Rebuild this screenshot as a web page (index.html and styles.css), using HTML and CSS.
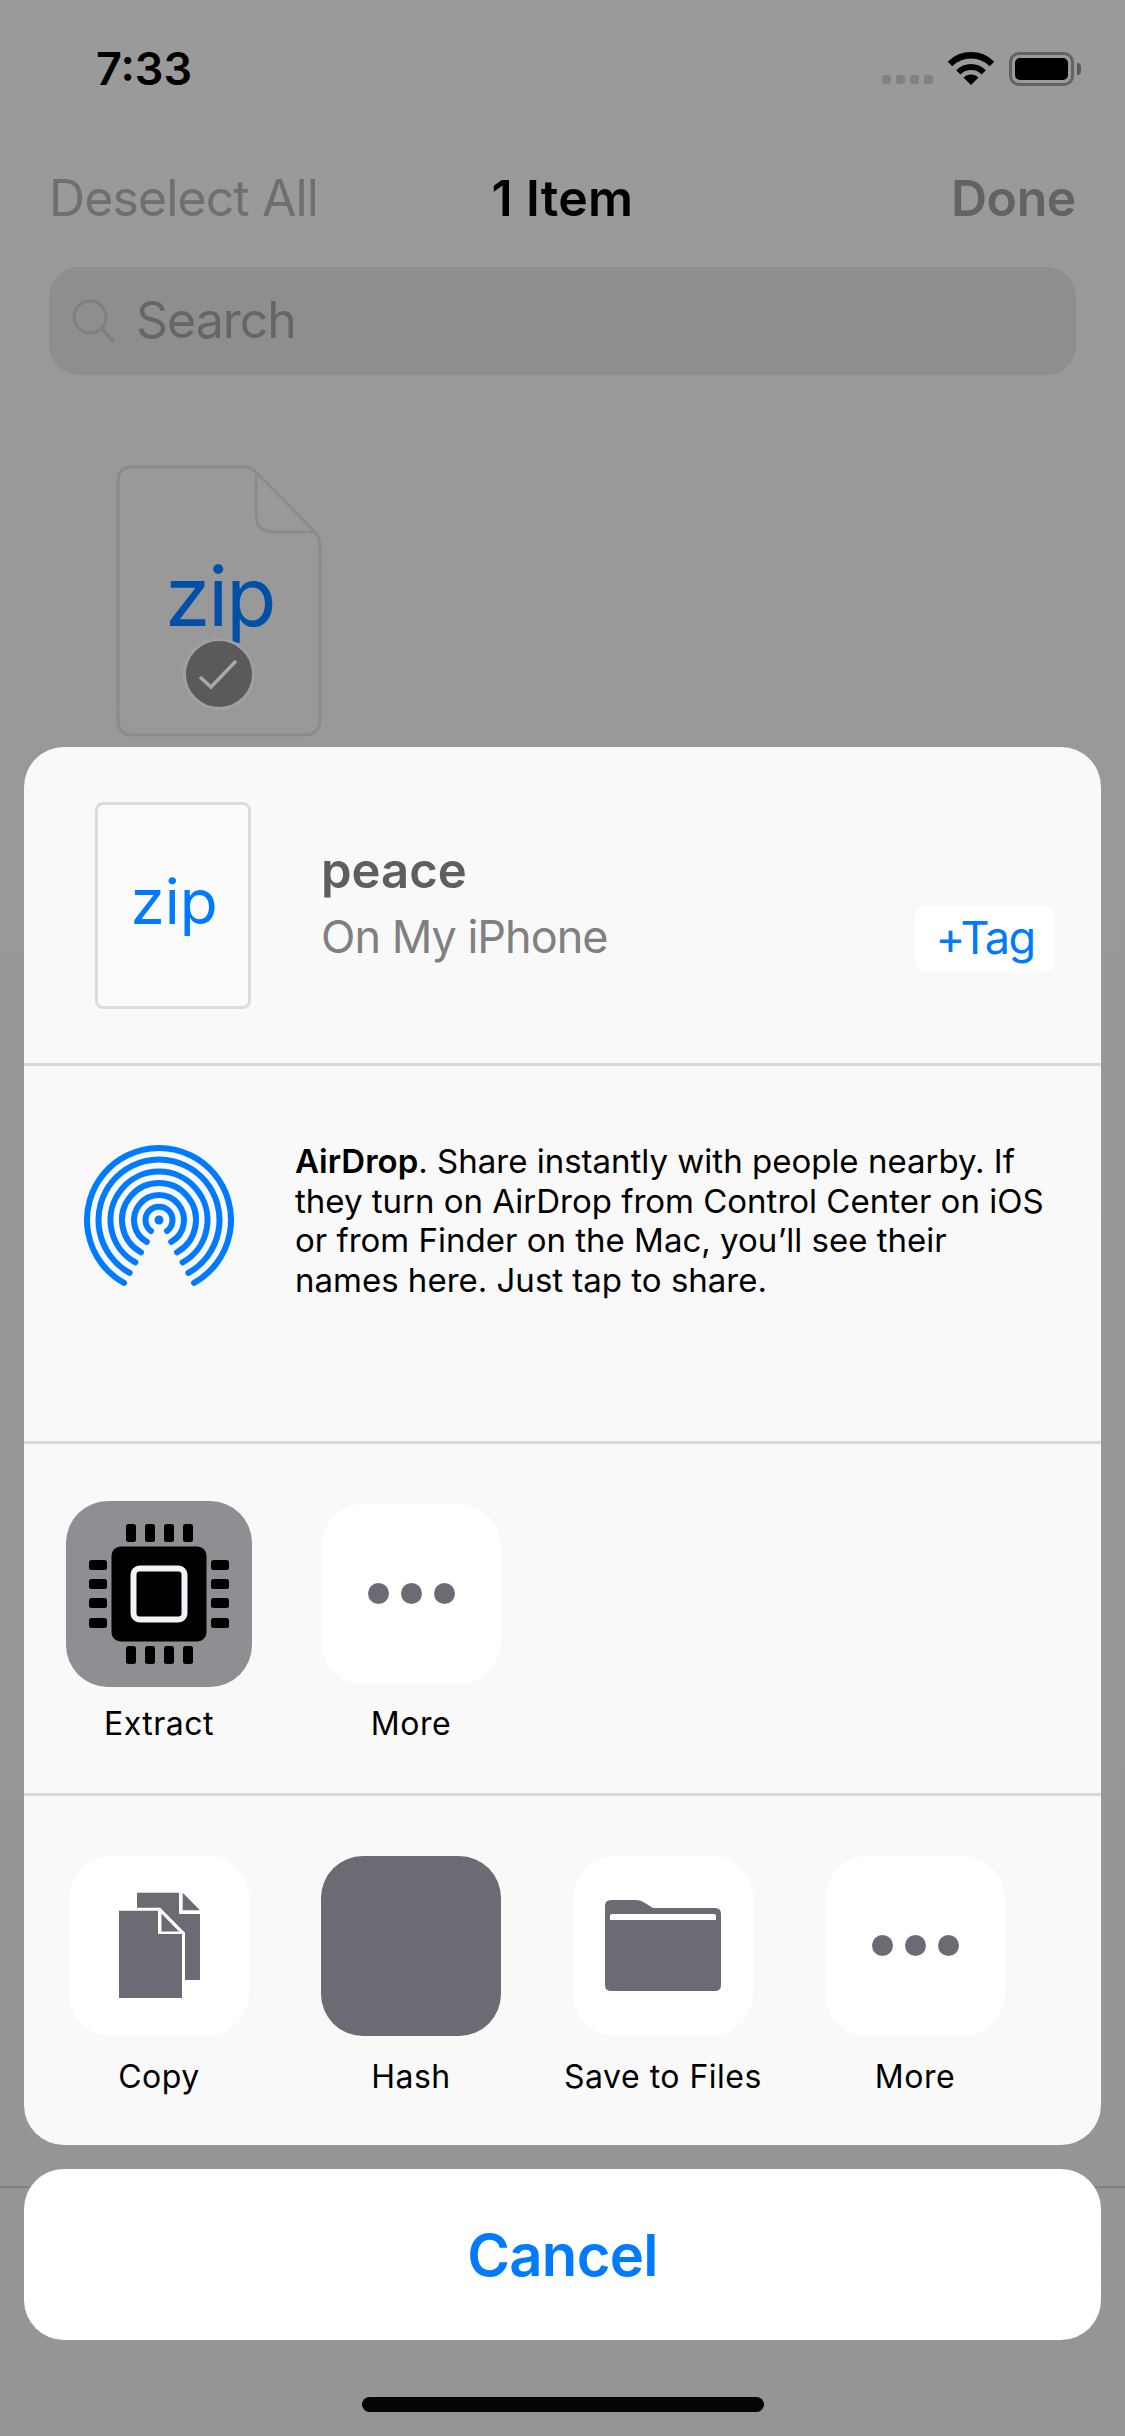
FILE: index.html
```html
<!DOCTYPE html>
<html lang="en">
<head>
    <meta charset="UTF-8">
    <meta name="viewport" content="width=device-width, initial-scale=1.0">
    <title>Share Sheet</title>
    <link rel="stylesheet" href="styles.css">
</head>
<body>

    <div class="screen">
        <!-- page behind the sheet -->
        <div class="status-bar">
            <span class="clock">7:33</span>
            <div class="status-icons">
                <div class="signal"><i></i><i></i><i></i><i></i></div>
                <svg class="wifi" width="46" height="33" viewBox="0 0 46 33">
                    <path d="M2 12A29.7 29.7 0 0 1 44 12" fill="none" stroke="#000" stroke-width="6.5"/>
                    <path d="M10.3 20.3A18 18 0 0 1 35.7 20.3" fill="none" stroke="#000" stroke-width="6"/>
                    <path d="M23 33L15.5 25.5A10.6 10.6 0 0 1 30.5 25.5Z" fill="#000"/>
                </svg>
                <div class="battery"><div class="battery-fill"></div></div>
                <div class="battery-nub"></div>
            </div>
        </div>

        <div class="nav-bar">
            <span class="nav-left">Deselect All</span>
            <span class="nav-title">1 Item</span>
            <span class="nav-right">Done</span>
        </div>

        <div class="search-bar">
            <svg width="44" height="44" viewBox="0 0 44 44">
                <circle cx="18" cy="18" r="16" fill="none" stroke="#7f7f7f" stroke-width="3"/>
                <path d="M30 30L42 43" fill="none" stroke="#7f7f7f" stroke-width="3.5"/>
            </svg>
            <span class="search-text">Search</span>
        </div>

        <div class="file-grid">
            <div class="file-item">
                <svg width="209" height="273" viewBox="0 0 209 273">
                    <path d="M16 2H128Q135 2 140 7L198 66Q204 72 204 80V254Q204 270 188 270H16Q2 270 2 254V16Q2 2 16 2Z" fill="none" stroke="#8b8b8b" stroke-width="3"/>
                    <path d="M140 9V50Q140 67 158 67H199" fill="none" stroke="#8b8b8b" stroke-width="3"/>
                </svg>
                <span class="file-type">zip</span>
                <div class="file-check">
                    <svg width="40" height="32" viewBox="0 0 40 32">
                        <path d="M1 19L12 29L37 3" fill="none" stroke="#a8a8a8" stroke-width="3.5"/>
                    </svg>
                </div>
            </div>
        </div>

        <div class="toolbar"></div>

        <!-- share sheet -->
        <div class="sheet-wrap">
            <div class="sheet">
                <div class="sheet-header">
                    <div class="sheet-file">zip</div>
                    <div class="sheet-info">
                        <div class="sheet-name">peace</div>
                        <div class="sheet-place">On My iPhone</div>
                    </div>
                    <div class="tag-btn">+Tag</div>
                </div>

                <div class="airdrop">
                    <svg class="airdrop-icon" width="160" height="160" viewBox="0 0 160 160">
                        <g fill="none" stroke="#007aff" stroke-width="6" stroke-linecap="round">
                            <path d="M45 142.900A72 72 0 1 1 115 142.900"/>
                            <path d="M50.600 132.900A60.500 60.500 0 1 1 109.400 132.900"/>
                            <path d="M56.400 122.400A48.500 48.500 0 1 1 103.600 122.400"/>
                            <path d="M62 112.300A37 37 0 1 1 98 112.300"/>
                            <path d="M67.800 101.900A25 25 0 1 1 92.200 101.900"/>
                            <path d="M72 91A13.500 13.500 0 1 1 88 91"/>
                        </g>
                        <circle cx="80" cy="80" r="4.500" fill="#007aff"/>
                    </svg>
                    <p class="airdrop-text"><b>AirDrop</b>. Share instantly with people nearby. If<br>they turn on AirDrop from Control Center on iOS<br>or from Finder on the Mac, you’ll see their<br>names here. Just tap to share.</p>
                </div>

                <div class="app-row">
                    <div class="app">
                        <div class="tile tile-big">
                            <svg width="186" height="186" viewBox="0 0 186 186">
                                <rect x="45.500" y="45.500" width="95" height="95" rx="9" fill="#000"/>
                                <rect x="67.500" y="67.500" width="51" height="51" rx="6" fill="none" stroke="#f2f2f7" stroke-width="6"/>
                                <g fill="#000">
                                    <rect x="60" y="23" width="10" height="18" rx="2.500"/>
                                    <rect x="79" y="23" width="10" height="18" rx="2.500"/>
                                    <rect x="98" y="23" width="10" height="18" rx="2.500"/>
                                    <rect x="117" y="23" width="10" height="18" rx="2.500"/>
                                    <rect x="60" y="145" width="10" height="18" rx="2.500"/>
                                    <rect x="79" y="145" width="10" height="18" rx="2.500"/>
                                    <rect x="98" y="145" width="10" height="18" rx="2.500"/>
                                    <rect x="117" y="145" width="10" height="18" rx="2.500"/>
                                    <rect x="23" y="59" width="18" height="10" rx="2.500"/>
                                    <rect x="23" y="78" width="18" height="10" rx="2.500"/>
                                    <rect x="23" y="97" width="18" height="10" rx="2.500"/>
                                    <rect x="23" y="117" width="18" height="10" rx="2.500"/>
                                    <rect x="145" y="59" width="18" height="10" rx="2.500"/>
                                    <rect x="145" y="78" width="18" height="10" rx="2.500"/>
                                    <rect x="145" y="97" width="18" height="10" rx="2.500"/>
                                    <rect x="145" y="117" width="18" height="10" rx="2.500"/>
                                </g>
                            </svg>
                        </div>
                        <span class="app-label">Extract</span>
                    </div>
                    <div class="app">
                        <div class="tile"><div class="dots"><i></i><i></i><i></i></div></div>
                        <span class="app-label">More</span>
                    </div>
                </div>

                <div class="action-row">
                    <div class="app">
                        <div class="tile">
                            <svg width="180" height="180" viewBox="0 0 180 180">
                                <path d="M68 36.700H110V58H131V124H68Z" fill="#6b6b73"/>
                                <path d="M113.700 36.700L131 54.300H113.700Z" fill="#6b6b73"/>
                                <path d="M50 54.700H90L113 78V142H50Z" fill="#fff" stroke="#fff" stroke-width="6"/>
                                <path d="M50 54.700H89V78H113V142H50Z" fill="#6b6b73"/>
                                <path d="M92.500 57.500L110 75.500H92.500Z" fill="#6b6b73"/>
                            </svg>
                        </div>
                        <span class="app-label">Copy</span>
                    </div>
                    <div class="app">
                        <div class="tile tile-dark"></div>
                        <span class="app-label">Hash</span>
                    </div>
                    <div class="app">
                        <div class="tile">
                            <svg width="180" height="180" viewBox="0 0 180 180">
                                <path d="M38 44H62Q68 44 72 47L80 52H142Q148 52 148 58V129Q148 135 142 135H38Q32 135 32 129V50Q32 44 38 44Z" fill="#6b6b73"/>
                                <path d="M39 58H141Q143 58 143 60V64H37V60Q37 58 39 58Z" fill="#fff"/>
                            </svg>
                        </div>
                        <span class="app-label">Save to Files</span>
                    </div>
                    <div class="app">
                        <div class="tile"><div class="dots"><i></i><i></i><i></i></div></div>
                        <span class="app-label">More</span>
                    </div>
                </div>
            </div>

            <div class="cancel-btn">Cancel</div>
        </div>

        <div class="home-bar"></div>
    </div>

</body>
</html>
```

FILE: styles.css
```css
/* iOS share sheet over a dimmed file browser */
body {
    margin: 0;
    font-family: Inter, "Noto Sans", sans-serif;
    background-color: #999;
}

.screen {
    position: relative;
    width: 1125px;
    height: 2436px;
    overflow: hidden;
    display: flex;
    flex-direction: column;
    background: linear-gradient(#9a9a9a, #959595);
}

/* status bar */
.status-bar {
    height: 110px;
    padding: 0 44px 0 96px;
    display: flex;
    justify-content: space-between;
}
.clock {
    margin-top: 42px;
    font-size: 45px;
    line-height: 53px;
    font-weight: 600;
    color: #000;
}
.status-icons {
    display: flex;
    align-items: flex-start;
    padding-top: 52px;
}
.signal {
    display: flex;
    gap: 5px;
    margin-top: 23px;
    margin-right: 15px;
}
.signal i {
    width: 9px;
    height: 9px;
    border-radius: 3px;
    background-color: #818181;
}
.battery {
    width: 65px;
    height: 34px;
    margin-left: 15px;
    padding: 3px;
    box-sizing: border-box;
    border: 3px solid #636363;
    border-radius: 10px;
}
.battery-fill {
    height: 100%;
    border-radius: 5px;
    background-color: #000;
}
.battery-nub {
    width: 4px;
    height: 12px;
    margin: 11px 0 0 3px;
    border-radius: 0 4px 4px 0;
    background-color: #5a5a5a;
}

/* nav */
.nav-bar {
    height: 157px;
    padding: 0 49px;
    display: grid;
    grid-template-columns: 1fr auto 1fr;
    font-size: 50px;
    line-height: 60px;
}
.nav-bar span {
    margin-top: 58px;
}
.nav-left {
    letter-spacing: -0.9px;
    color: #6f6f6f;
}
.nav-title {
    font-weight: 600;
    letter-spacing: 0.3px;
    color: #000;
}
.nav-right {
    text-align: right;
    font-weight: 600;
    letter-spacing: -0.4px;
    color: #636363;
}

/* search */
.search-bar {
    width: 1027px;
    height: 108px;
    margin-left: 49px;
    padding-left: 23px;
    box-sizing: border-box;
    display: flex;
    align-items: center;
    gap: 20px;
    border-radius: 30px;
    background-color: #8e8e8e;
    font-size: 50px;
    color: #666;
}
.search-text {
    margin-top: -3px;
    letter-spacing: -1px;
}

/* file behind the sheet */
.file-grid {
    padding: 90px 0 0 116px;
}
.file-item {
    position: relative;
    width: 209px;
    height: 273px;
}
.file-type {
    position: absolute;
    left: 49px;
    top: 82px;
    font-size: 82px;
    line-height: 100px;
    letter-spacing: -2px;
    color: #0050a8;
}
.file-check {
    position: absolute;
    left: 67px;
    top: 173px;
    width: 66px;
    height: 66px;
    display: flex;
    align-items: center;
    justify-content: center;
    border: 3px solid #a0a0a0;
    border-radius: 50%;
    background-color: #5a5a5a;
}

.toolbar {
    margin-top: auto;
    height: 248px;
    border-top: 2px solid #808080;
}

/* sheet */
.sheet-wrap {
    position: absolute;
    left: 24px;
    top: 747px;
    width: 1077px;
}
.sheet {
    height: 1398px;
    border-radius: 40px;
    background-color: #f9f9f9;
    overflow: hidden;
}
.sheet-header {
    height: 316px;
    padding-right: 46px;
    display: flex;
    align-items: flex-start;
    border-bottom: 3px solid #d9d9de;
}
.sheet-file {
    width: 156px;
    height: 207px;
    margin: 55px 0 0 71px;
    padding: 0 0 8px 2px;
    box-sizing: border-box;
    display: flex;
    align-items: center;
    justify-content: center;
    border: 3px solid #ddd;
    border-radius: 8px;
    background-color: #fbfbfb;
    font-size: 62px;
    color: #007aff;
}
.sheet-info {
    margin: 90px 0 0 70px;
    flex: 1;
}
.sheet-name {
    font-size: 49px;
    line-height: 67px;
    font-weight: 600;
    color: #5f5f5f;
}
.sheet-place {
    font-size: 45px;
    line-height: 66px;
    letter-spacing: -1px;
    color: #808080;
}
.tag-btn {
    width: 140px;
    height: 66px;
    margin-top: 159px;
    padding-bottom: 3px;
    box-sizing: border-box;
    display: flex;
    align-items: center;
    justify-content: center;
    border-radius: 10px;
    background-color: #fff;
    font-size: 45px;
    letter-spacing: -1.5px;
    color: #007aff;
}

.airdrop {
    height: 375px;
    display: flex;
    align-items: flex-start;
    border-bottom: 3px solid #d9d9de;
}
.airdrop-icon {
    margin: 74px 0 0 55px;
    flex-shrink: 0;
}
.airdrop-text {
    margin: 76px 0 0 56px;
    font-size: 33px;
    line-height: 39.500px;
    color: #000;
}
.airdrop-text b {
    font-weight: 600;
}

.app-row {
    height: 349px;
    padding-left: 9px;
    display: flex;
    align-items: flex-start;
    border-bottom: 3px solid #d9d9de;
}
.app-row .app {
    padding-top: 60px;
}
.app-row .tile-big {
    margin-top: -3px;
    margin-bottom: -3px;
}
.action-row {
    padding-left: 9px;
    display: flex;
    align-items: flex-start;
}
.action-row .app {
    padding-top: 60px;
}
.action-row .app-label {
    margin-top: 21px;
}
.app {
    width: 252px;
    display: flex;
    flex-direction: column;
    align-items: center;
}
.tile {
    width: 180px;
    height: 180px;
    display: flex;
    align-items: center;
    justify-content: center;
    border-radius: 42px;
    background-color: #fff;
}
.tile-big {
    width: 186px;
    height: 186px;
    background-color: #8e8e93;
}
.tile-dark {
    background-color: #6b6b73;
}
.dots {
    display: flex;
    gap: 12px;
    margin-top: -2px;
}
.dots i {
    width: 21px;
    height: 21px;
    border-radius: 50%;
    background-color: #6b6b73;
}
.app-label {
    margin-top: 20px;
    font-size: 32px;
    line-height: 40px;
    letter-spacing: 0.5px;
    color: #000;
}

.cancel-btn {
    height: 171px;
    margin-top: 24px;
    display: flex;
    align-items: center;
    justify-content: center;
    border-radius: 40px;
    background-color: #fff;
    font-size: 58px;
    font-weight: 600;
    letter-spacing: -0.7px;
    color: #007aff;
}

.home-bar {
    position: absolute;
    left: 362px;
    top: 2397px;
    width: 402px;
    height: 15px;
    border-radius: 8px;
    background-color: #050505;
}
```
